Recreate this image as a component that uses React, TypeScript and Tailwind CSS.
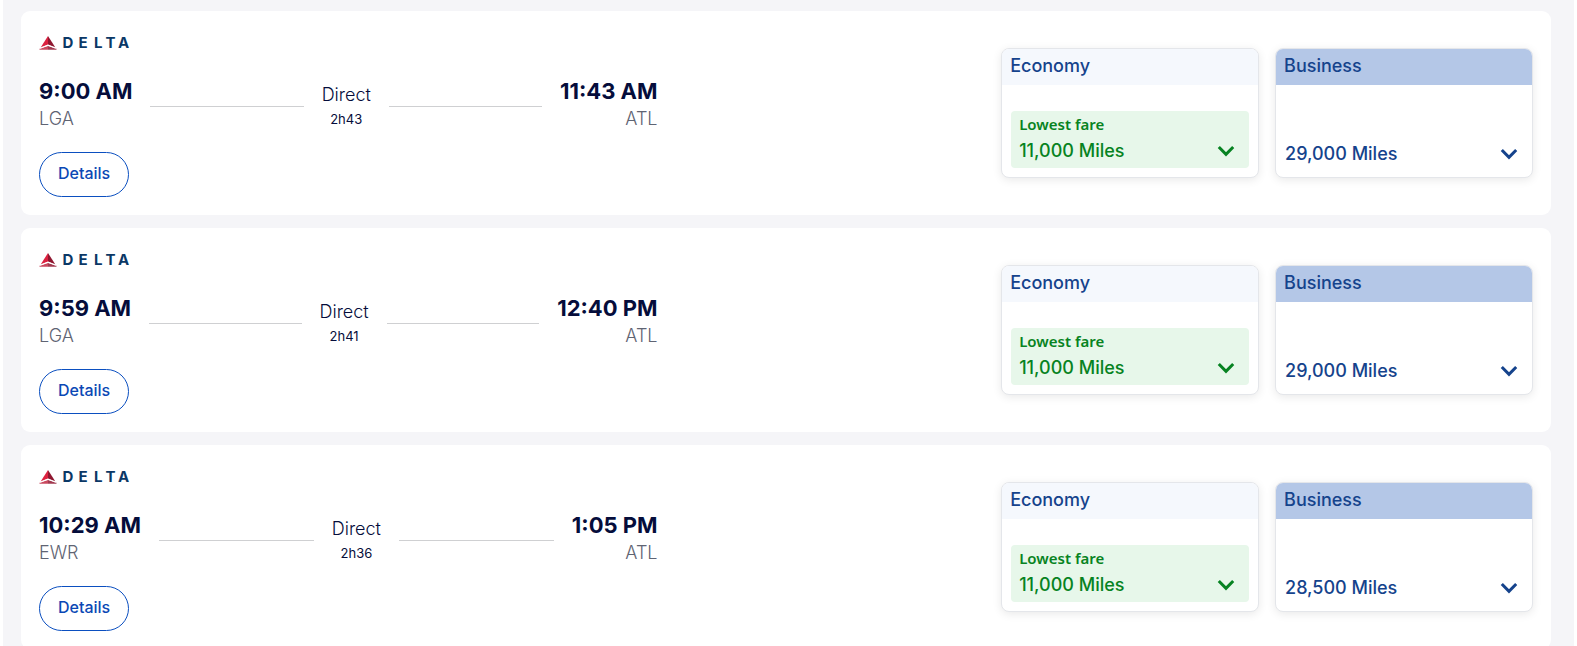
type Flight = {
  depart: string;
  from: string;
  arrive: string;
  to: string;
  duration: string;
  economy: string;
  business: string;
};

const flights: Flight[] = [
  { depart: "9:00 AM", from: "LGA", arrive: "11:43 AM", to: "ATL", duration: "2h43", economy: "11,000 Miles", business: "29,000 Miles" },
  { depart: "9:59 AM", from: "LGA", arrive: "12:40 PM", to: "ATL", duration: "2h41", economy: "11,000 Miles", business: "29,000 Miles" },
  { depart: "10:29 AM", from: "EWR", arrive: "1:05 PM", to: "ATL", duration: "2h36", economy: "11,000 Miles", business: "28,500 Miles" },
];

function DeltaLogo() {
  return (
    <svg width="100" height="24" viewBox="0 -5 100 24" role="img" aria-label="Delta" className="block">
      <path d="M9 0 L9 8.4 L1.8 11.2 Z" fill="#dc2240" />
      <path d="M9 0 L16.2 11.2 L9 8.4 Z" fill="#8f1730" />
      <path d="M0.8 12.6 L9 10 L9 13.8 L0.4 13.8 Z" fill="#c94a5f" />
      <path d="M17.2 12.6 L9 10 L9 13.8 L17.6 13.8 Z" fill="#a23a50" />
      <path d="M1.2 12.4 L9 9.2 L16.8 12.4" fill="none" stroke="#fff" strokeWidth="1" />
      <text x="23.5 39.5 55 66.5 79" y="12" fontFamily="Inter, sans-serif" fontWeight="700" fontSize="15" fill="#0b3866">
        DELTA
      </text>
    </svg>
  );
}

function Chevron() {
  return (
    <svg width="18" height="12" viewBox="0 0 18 12" fill="none" stroke="currentColor" strokeWidth="3" aria-hidden="true">
      <path d="M1.8 2 L9 9.4 L16.2 2" strokeLinejoin="miter" />
    </svg>
  );
}

function FareCard({ cabin, price, lowest }: { cabin: string; price: string; lowest?: boolean }) {
  return (
    <section className="flex h-[130px] flex-1 flex-col overflow-hidden rounded-lg border border-[#e4e6ea] bg-white text-[#15438c] shadow-[0_2px_10px_rgba(0,0,0,0.09)]">
      <h3 className={`h-9 px-2 pt-1 text-[18px] leading-[26px] font-medium ${lowest ? "bg-[#f5f8fd]" : "bg-[#b4c7e7]"}`}>{cabin}</h3>
      <div className="flex flex-1 flex-col justify-end px-[9px] pb-[9px]">
        {lowest ? (
          <button type="button" className="flex h-[57px] flex-col rounded bg-[#e7f7ea] pr-3.5 pl-2 text-left text-[#078322]">
            <span className="pt-px font-['Noto_Sans',sans-serif] text-[15px] leading-6 font-semibold">Lowest fare</span>
            <span className="flex w-full items-center justify-between text-[18px] leading-[30px] font-medium">
              {price}
              <Chevron />
            </span>
          </button>
        ) : (
          <button type="button" className="flex w-full items-center justify-between pr-[5px] text-left text-[18px] leading-7 font-medium">
            {price}
            <Chevron />
          </button>
        )}
      </div>
    </section>
  );
}

function FlightCard({ flight }: { flight: Flight }) {
  return (
    <article className="flex items-start justify-between rounded-[9px] bg-white px-[18px] pt-5 pb-[18px]">
      <div className="w-[41.4%]">
        <DeltaLogo />
        <div className="mt-5 flex items-center gap-[18px] text-[#050d3b]">
          <div>
            <div className="text-[22px] leading-8 font-bold">{flight.depart}</div>
            <div className="text-[18px] leading-6 font-light text-[#5f6473]">{flight.from}</div>
          </div>
          <div className="mt-1.5 h-px flex-1 bg-[#cfd0d2]" />
          <div className="pt-2 text-center">
            <div className="text-[18px] leading-6 font-light">Direct</div>
            <div className="text-[13px] leading-6">{flight.duration}</div>
          </div>
          <div className="mt-1.5 h-px flex-1 bg-[#cfd0d2]" />
          <div className="text-right">
            <div className="text-[22px] leading-8 font-bold">{flight.arrive}</div>
            <div className="text-[18px] leading-6 font-light text-[#5f6473]">{flight.to}</div>
          </div>
        </div>
        <button type="button" className="mt-[21px] h-[45px] rounded-full border border-[#0b4fc0] px-[18px] pb-1 text-[16px] font-medium text-[#0b48b5]">
          Details
        </button>
      </div>
      <div className="mt-[17px] flex w-[35.6%] gap-4">
        <FareCard cabin="Economy" price={flight.economy} lowest />
        <FareCard cabin="Business" price={flight.business} />
      </div>
    </article>
  );
}

export default function App() {
  return (
    <div className="h-screen overflow-hidden bg-white px-[3px] font-[Inter,sans-serif]">
      <main className="flex min-h-full flex-col gap-[13px] bg-[#f5f5f8] pt-[11px] pr-[23px] pl-[18px]">
        {flights.map((flight) => (
          <FlightCard key={flight.depart} flight={flight} />
        ))}
      </main>
    </div>
  );
}
